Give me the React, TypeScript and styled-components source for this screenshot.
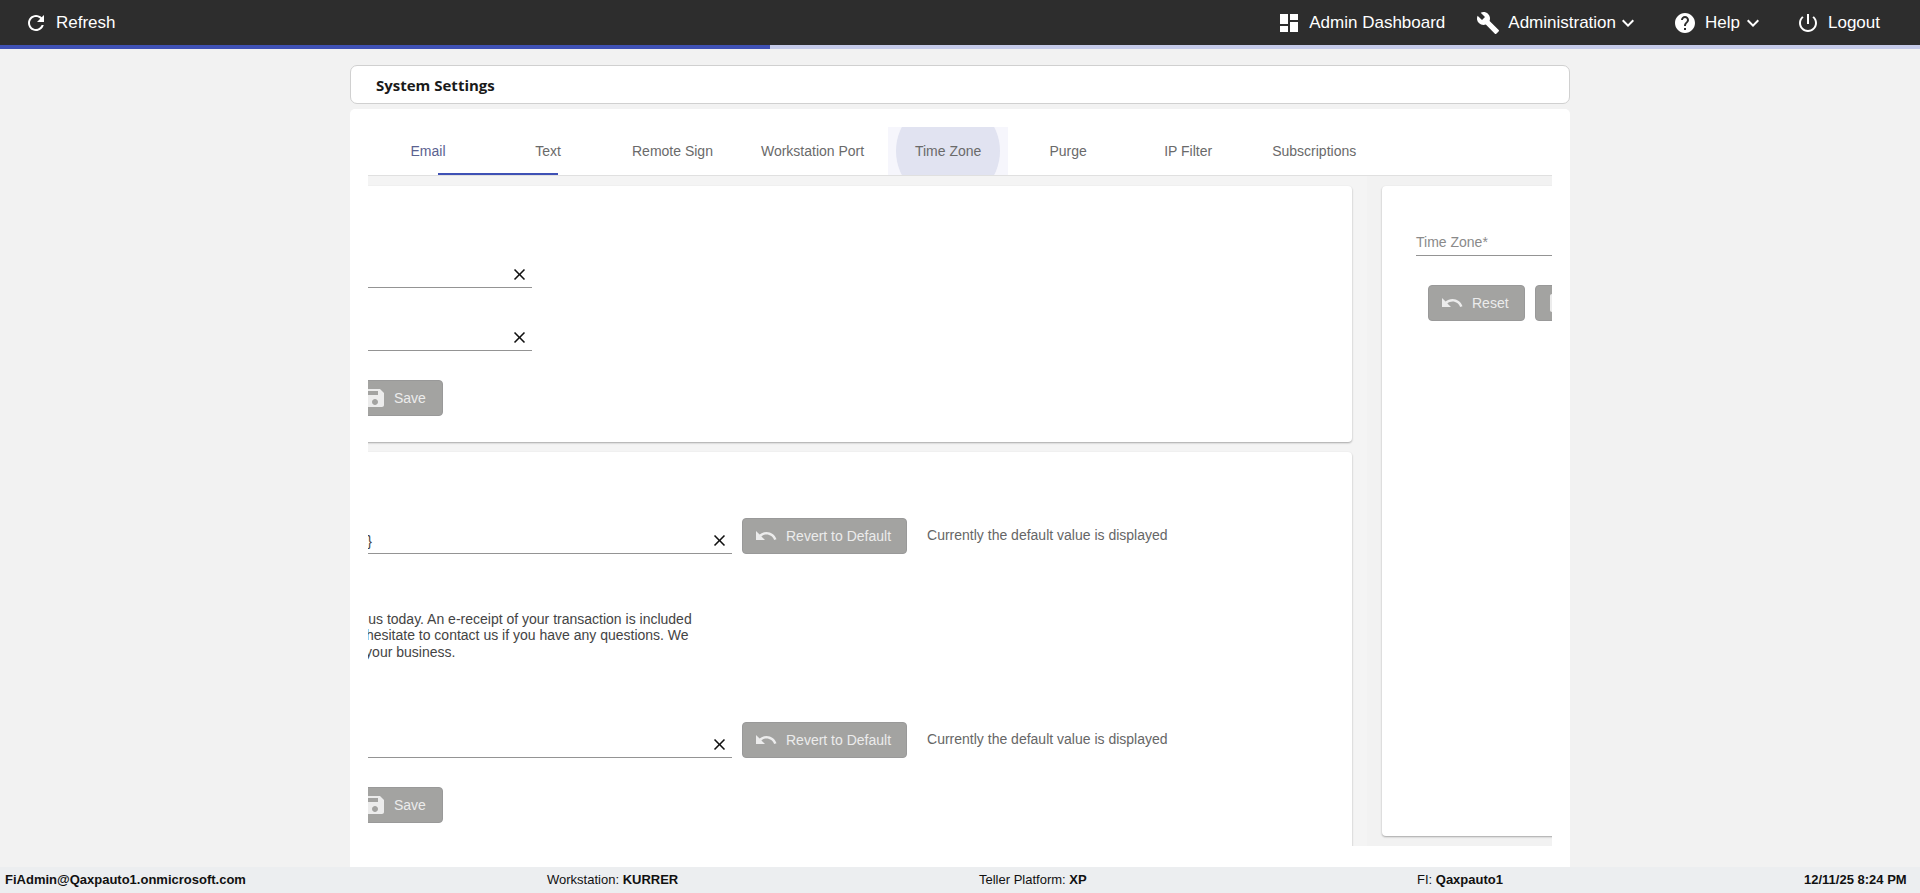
import React from "react";
import styled, { createGlobalStyle } from "styled-components";

const Global = createGlobalStyle`
  html, body { margin: 0; height: 100%; overflow: hidden; background: #f2f2f2; }
  body { font-family: "Liberation Sans", Arial, sans-serif; }
  * { box-sizing: border-box; }
`;

const Shell = styled.div`
  display: flex;
  flex-direction: column;
  height: 100vh;
`;

const TopBar = styled.header`
  height: 45px;
  flex: none;
  display: flex;
  align-items: center;
  background: #2d2d2d;
  color: #fff;
  font-size: 17px;
  padding: 0 40px 0 24px;
`;

const NavItem = styled.div<{ $left?: number }>`
  display: flex;
  align-items: center;
  gap: 8px;
  margin-left: ${(p) => p.$left ?? 0}px;
  white-space: nowrap;
`;

const Chevron = styled.span<{ $pull: number }>`
  display: flex;
  margin-left: -${(p) => p.$pull}px;
`;

const Spacer = styled.div`
  flex: 1;
`;

const Track = styled.div`
  height: 4px;
  flex: none;
  background: #c5cae9;
`;

const Bar = styled.div<{ $pct: number }>`
  height: 100%;
  width: ${(p) => p.$pct}%;
  background: #3f51b5;
`;

const Main = styled.main`
  flex: 1;
  min-height: 0;
  display: flex;
  flex-direction: column;
  gap: 5px;
  padding: 16px 350px 0;
  overflow: hidden;
`;

const TitleCard = styled.div`
  height: 39px;
  flex: none;
  display: flex;
  align-items: center;
  padding-left: 25px;
  background: #fff;
  border: 1px solid #d0d0d0;
  border-radius: 7px;
  font-family: "Open Sans", sans-serif;
  font-weight: 700;
  font-size: 15px;
  color: #1a1a1a;
`;

const ContentCard = styled.section`
  flex: 1;
  min-height: 0;
  background: #fff;
  border-radius: 5px 5px 0 0;
  padding: 18px 18px 0;
`;

const TabBar = styled.nav`
  position: relative;
  display: flex;
  height: 49px;
  border-bottom: 1px solid #e0e0e0;
`;

const Tab = styled.div<{ $active?: boolean; $hover?: boolean }>`
  position: relative;
  min-width: 120px;
  height: 48px;
  padding: 0 24px;
  display: flex;
  align-items: center;
  justify-content: center;
  overflow: hidden;
  font-size: 14px;
  white-space: nowrap;
  color: ${(p) => (p.$active ? "#5b6290" : "#6a6a6a")};
  background: ${(p) => (p.$hover ? "#f6f6fc" : "transparent")};
`;

const Ripple = styled.span`
  position: absolute;
  left: 8px;
  top: -28px;
  width: 104px;
  height: 104px;
  border-radius: 50%;
  background: #e1e3f1;
`;

const TabLabel = styled.span`
  position: relative;
`;

const Indicator = styled.span`
  position: absolute;
  left: 70px;
  bottom: 0;
  width: 120px;
  height: 2px;
  background: #3f51b5;
`;

const Scroller = styled.div`
  height: 670px;
  overflow: hidden;
  background: #f2f2f2;
`;

const Canvas = styled.div`
  display: flex;
  width: 1700px;
  height: 100%;
  margin-left: -200px;
`;

const LeftPane = styled.div`
  flex: none;
  width: 1199px;
  padding: 10px 15px 0 0;
  display: flex;
  flex-direction: column;
  gap: 10px;
  background: #f4f4f4;
`;

const RightPane = styled.div`
  flex: none;
  width: 500px;
  padding: 10px 0 0 15px;
`;

const Card = styled.div<{ $grow?: boolean; $top: number; $left: number }>`
  background: #fff;
  border-radius: 4px;
  box-shadow: 0 1px 2px rgba(0, 0, 0, 0.32);
  padding: ${(p) => p.$top}px 0 26px ${(p) => p.$left}px;
  ${(p) => (p.$grow ? "flex: none; height: 660px;" : "")}
`;

const TallCard = styled(Card)`
  height: 650px;
`;

const Field = styled.div<{ $w: number; $h?: number; $mt?: number }>`
  width: ${(p) => p.$w}px;
  height: ${(p) => p.$h ?? 32}px;
  margin-top: ${(p) => p.$mt ?? 0}px;
  flex: none;
  display: flex;
  align-items: center;
  justify-content: space-between;
  border-bottom: 1px solid #949494;
  padding: 5px 3px 0 0;
`;

const TallField = styled(Field)`
  padding-top: 10px;
`;

const FieldText = styled.span<{ $indent?: number }>`
  font-size: 14px;
  color: #444;
  margin-left: ${(p) => p.$indent ?? 0}px;
  white-space: nowrap;
`;

const Placeholder = styled.span`
  font-size: 14px;
  color: #8a8a8a;
  white-space: nowrap;
`;

const Row = styled.div<{ $mt?: number }>`
  display: flex;
  align-items: center;
  margin-top: ${(p) => p.$mt ?? 0}px;
`;

const Button = styled.div<{ $ml?: number; $mt?: number; $tight?: boolean }>`
  height: 36px;
  flex: none;
  display: inline-flex;
  align-items: center;
  gap: ${(p) => (p.$tight ? 7 : 8)}px;
  width: fit-content;
  padding: 0 ${(p) => (p.$tight ? 16 : 15)}px 0 11px;
  margin-left: ${(p) => p.$ml ?? 0}px;
  margin-top: ${(p) => p.$mt ?? 0}px;
  background: #a3a3a1;
  border: 1px solid #999;
  border-radius: 4px;
  color: #ececec;
  font-size: 14px;
  white-space: nowrap;
`;

const Caption = styled.span`
  margin-left: 20px;
  padding-bottom: 2px;
  font-size: 14px;
  color: #666;
  white-space: nowrap;
`;

const Paragraph = styled.p`
  margin: 57px 0 0;
  font-size: 14px;
  line-height: 16.4px;
  color: #444;
  white-space: nowrap;
`;

const ButtonRow = styled.div`
  display: flex;
  gap: 10px;
  margin: 29px 0 0 12px;
`;

const Footer = styled.footer`
  height: 26px;
  flex: none;
  display: grid;
  grid-template-columns: 542px 432px 438px 387px auto;
  align-items: center;
  padding: 0 0 2px 5px;
  background: #eceef0;
  color: #111;
  font-size: 13px;
  white-space: nowrap;
`;

const Strong = styled.b`
  font-weight: 700;
`;

const Svg = ({ d, size = 24, color = "currentColor" }: { d: string; size?: number; color?: string }) => (
  <svg width={size} height={size} viewBox="0 0 24 24" fill={color} style={{ flex: "none" }}>
    <path d={d} />
  </svg>
);

const I = {
  refresh:
    "M17.65 6.35C16.2 4.9 14.21 4 12 4c-4.42 0-7.99 3.58-7.99 8s3.57 8 7.99 8c3.73 0 6.84-2.55 7.73-6h-2.08c-.82 2.33-3.04 4-5.65 4-3.31 0-6-2.69-6-6s2.69-6 6-6c1.66 0 3.14.69 4.22 1.78L13 11h7V4l-2.35 2.35z",
  dash: "M3 13h8V3H3v10zm0 8h8v-6H3v6zm10 0h8V11h-8v10zm0-18v6h8V3h-8z",
  wrench:
    "M22.7 19l-9.1-9.1c.9-2.3.4-5-1.5-6.9-2-2-5-2.4-7.4-1.3L9 6 6 9 1.6 4.7C.4 7.1.9 10.1 2.9 12.1c1.9 1.9 4.6 2.4 6.9 1.5l9.1 9.1c.4.4 1 .4 1.4 0l2.3-2.3c.5-.4.5-1.1.1-1.4z",
  chevron: "M7.41 8.59L12 13.17l4.59-4.58L18 10l-6 6-6-6 1.41-1.41z",
  help: "M12 2C6.48 2 2 6.48 2 12s4.48 10 10 10 10-4.48 10-10S17.52 2 12 2zm1 17h-2v-2h2v2zm2.07-7.75l-.9.92C13.45 12.9 13 13.5 13 15h-2v-.5c0-1.1.45-2.1 1.17-2.83l1.24-1.26c.37-.36.59-.86.59-1.41 0-1.1-.9-2-2-2s-2 .9-2 2H8c0-2.21 1.79-4 4-4s4 1.79 4 4c0 .88-.36 1.68-.93 2.25z",
  power:
    "M13 3h-2v10h2V3zm4.83 2.17l-1.42 1.42C17.99 7.86 19 9.81 19 12c0 3.87-3.13 7-7 7s-7-3.13-7-7c0-2.19 1.01-4.14 2.58-5.42L6.17 5.17C4.23 6.82 3 9.26 3 12c0 4.97 4.03 9 9 9s9-4.03 9-9c0-2.74-1.23-5.18-3.17-6.83z",
  close: "M19 6.41L17.59 5 12 10.59 6.41 5 5 6.41 10.59 12 5 17.59 6.41 19 12 13.41 17.59 19 19 17.59 13.41 12z",
  undo: "M12.5 8c-2.65 0-5.05.99-6.9 2.6L2 7v9h9l-3.62-3.62c1.39-1.16 3.16-1.88 5.12-1.88 3.54 0 6.55 2.31 7.6 5.5l2.37-.78C21.08 11.03 17.15 8 12.5 8z",
  save: "M17 3H5c-1.11 0-2 .9-2 2v14c0 1.1.89 2 2 2h14c1.1 0 2-.9 2-2V7l-4-4zm-5 16c-1.66 0-3-1.34-3-3s1.34-3 3-3 3 1.34 3 3-1.34 3-3 3zm3-10H5V5h10v4z",
};

const Clear = () => <Svg d={I.close} size={19} color="#111" />;

const ActionButton = ({
  icon,
  label,
  ml,
  mt,
  tight,
}: {
  icon: string;
  label: string;
  ml?: number;
  mt?: number;
  tight?: boolean;
}) => (
  <Button $ml={ml} $mt={mt} $tight={tight}>
    <Svg d={icon} />
    {label}
  </Button>
);

const tabs = ["Email", "Text", "Remote Sign", "Workstation Port", "Time Zone", "Purge", "IP Filter", "Subscriptions"];

export default function App() {
  return (
    <Shell>
      <Global />
      <TopBar>
        <NavItem>
          <Svg d={I.refresh} />
          Refresh
        </NavItem>
        <Spacer />
        <NavItem>
          <Svg d={I.dash} />
          Admin Dashboard
        </NavItem>
        <NavItem $left={31}>
          <Svg d={I.wrench} />
          Administration
          <Chevron $pull={8}>
            <Svg d={I.chevron} />
          </Chevron>
        </NavItem>
        <NavItem $left={33}>
          <Svg d={I.help} />
          Help
          <Chevron $pull={7}>
            <Svg d={I.chevron} />
          </Chevron>
        </NavItem>
        <NavItem $left={31}>
          <Svg d={I.power} />
          Logout
        </NavItem>
      </TopBar>
      <Track>
        <Bar $pct={40.1} />
      </Track>
      <Main>
        <TitleCard>System Settings</TitleCard>
        <ContentCard>
          <TabBar>
            {tabs.map((t) => (
              <Tab key={t} $active={t === "Email"} $hover={t === "Time Zone"}>
                {t === "Time Zone" && <Ripple />}
                <TabLabel>{t}</TabLabel>
              </Tab>
            ))}
            <Indicator />
          </TabBar>
          <Scroller>
            <Canvas>
              <LeftPane>
                <Card $top={70} $left={29}>
                  <Field $w={335}>
                    <span />
                    <Clear />
                  </Field>
                  <Field $w={335} $mt={31}>
                    <span />
                    <Clear />
                  </Field>
                  <ActionButton icon={I.save} label="Save" ml={154} mt={29} tight />
                </Card>
                <Card $grow $top={66} $left={29}>
                  <Row>
                    <TallField $w={535} $h={36}>
                      <FieldText $indent={112}>{"{FI Name}"}</FieldText>
                      <Clear />
                    </TallField>
                    <ActionButton icon={I.undo} label="Revert to Default" ml={10} />
                    <Caption>Currently the default value is displayed</Caption>
                  </Row>
                  <Paragraph>
                    Thank you for banking with us today. An e-receipt of your transaction is included
                    <br />
                    in the email. Please do not hesitate to contact us if you have any questions. We
                    <br />
                    truly value, and appreciate your business.
                  </Paragraph>
                  <Row $mt={62}>
                    <TallField $w={535} $h={36}>
                      <span />
                      <Clear />
                    </TallField>
                    <ActionButton icon={I.undo} label="Revert to Default" ml={10} />
                    <Caption>Currently the default value is displayed</Caption>
                  </Row>
                  <ActionButton icon={I.save} label="Save" ml={154} mt={29} tight />
                </Card>
              </LeftPane>
              <RightPane>
                <TallCard $top={38} $left={34}>
                  <Field $w={400}>
                    <Placeholder>Time Zone*</Placeholder>
                  </Field>
                  <ButtonRow>
                    <ActionButton icon={I.undo} label="Reset" />
                    <ActionButton icon={I.save} label="Save" tight />
                  </ButtonRow>
                </TallCard>
              </RightPane>
            </Canvas>
          </Scroller>
        </ContentCard>
      </Main>
      <Footer>
        <Strong>FiAdmin@Qaxpauto1.onmicrosoft.com</Strong>
        <span>
          Workstation: <Strong>KURRER</Strong>
        </span>
        <span>
          Teller Platform: <Strong>XP</Strong>
        </span>
        <span>
          FI: <Strong>Qaxpauto1</Strong>
        </span>
        <Strong>12/11/25 8:24 PM</Strong>
      </Footer>
    </Shell>
  );
}
